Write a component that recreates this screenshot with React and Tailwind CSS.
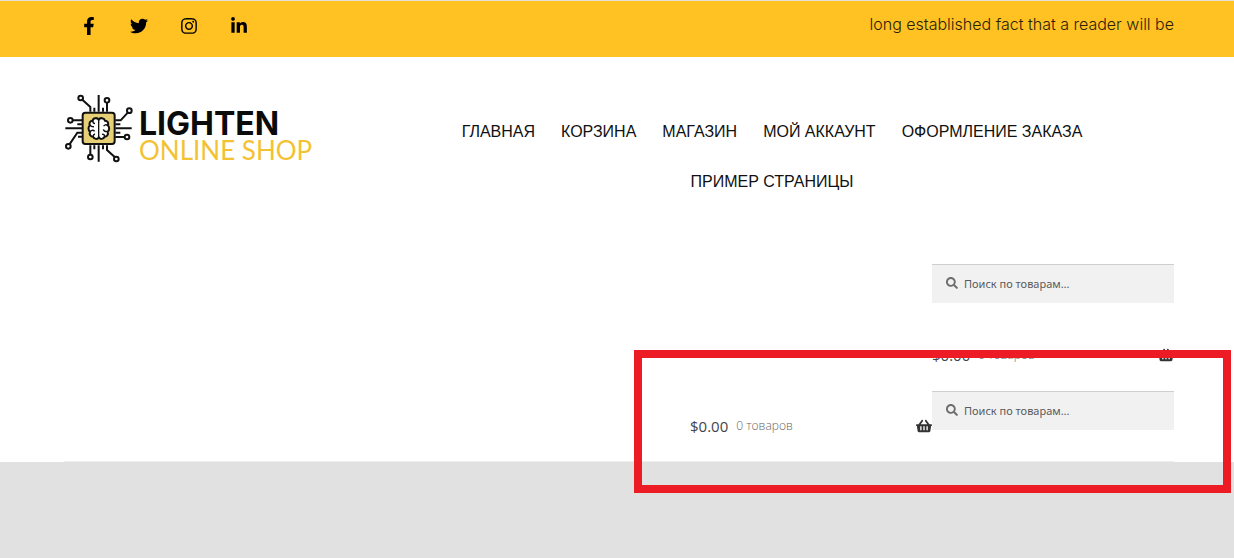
import React from "react";
import { FaFacebookF, FaTwitter, FaInstagram, FaLinkedinIn, FaSearch, FaShoppingBasket } from "react-icons/fa";

const socials = [
  { name: "Facebook", icon: FaFacebookF },
  { name: "Twitter", icon: FaTwitter },
  { name: "Instagram", icon: FaInstagram },
  { name: "LinkedIn", icon: FaLinkedinIn },
];

const menu = ["ГЛАВНАЯ", "КОРЗИНА", "МАГАЗИН", "МОЙ АККАУНТ", "ОФОРМЛЕНИЕ ЗАКАЗА", "ПРИМЕР СТРАНИЦЫ"];

// Chip with a brain inside and traces going out on every side
const ChipIcon = () => (
  <svg viewBox="12 12 210 210" className="size-[70px] shrink-0" fill="none" stroke="#111" strokeWidth="6" aria-hidden="true">
    <path d="M116 15v50M116 166v49M16 115h50M166 115h49" />
    <path d="M91 65V51L67 29M141 65V37M103 65V53M129 65V53" />
    <path d="M91 166v29M141 166v14l24 22M103 166v12M129 166v12" />
    <path d="M66 91H38M66 128H52L28 164M66 103H52M66 140H54" />
    <path d="M166 91h16l22-24M166 141h28M166 103h15M166 128h15" />
    <g fill="#fff">
      <circle cx="62" cy="24" r="7" />
      <circle cx="141" cy="31" r="7" />
      <circle cx="208" cy="62" r="7" />
      <circle cx="31" cy="91" r="7" />
      <circle cx="25" cy="169" r="7" />
      <circle cx="91" cy="201" r="7" />
      <circle cx="169" cy="207" r="7" />
      <circle cx="201" cy="141" r="7" />
    </g>
    <rect x="68" y="68" width="96" height="94" rx="8" fill="#e6cf74" />
    <path
      d="M116 89c-4-7-17-6-18 3-8 0-12 8-8 14-6 5-6 14 0 19-3 8 2 15 9 15 3 8 14 9 17 2 4 7 15 6 18-2 7 0 12-7 9-15 6-5 6-14 0-19 4-6 0-14-8-14-2-9-15-10-19-3z"
      fill="#fff"
    />
    <path d="M116 89v53M98 92c0 6 3 8 7 9M90 125c5-5 10-5 14-1M99 140c0-5 2-7 6-8M90 106c4 4 8 5 12 4M134 140c0-6-4-8-8-7M142 106c-4-3-9-2-11 3M142 125c-6 0-11-2-12-7" strokeWidth="4" />
  </svg>
);

const ProductSearch = ({ id }) => (
  <form role="search" className="relative w-[242px]">
    <label htmlFor={id} aria-label="Поиск по товарам" className="absolute left-[14px] top-[13px] text-[#6d6d6d]">
      <FaSearch className="size-3" />
    </label>
    <input
      id={id}
      type="search"
      placeholder="Поиск по товарам…"
      className="block h-[39px] w-full border-t border-[#cfcfcf] bg-[#f1f1f1] pb-0.5 pl-8 pr-3 font-['Noto_Sans',sans-serif] text-[11px] text-[#43454b] outline-none placeholder:text-[#5a5a5a]"
    />
  </form>
);

const CartLink = () => (
  <a href="#cart" className="flex h-10 w-[242px] items-center font-['Open_Sans',sans-serif] text-[15px] text-[#333]">
    <span className="text-[#43454b]">$0.00</span>
    <span className="ml-2 text-[12px] font-light text-[#666]">0 товаров</span>
    <FaShoppingBasket className="ml-auto size-4" />
  </a>
);

const App = () => {
  return (
    <div className="relative flex min-h-screen flex-col bg-white">
      {/* Top bar */}
      <div className="flex h-[57px] items-start justify-between border-t border-[#e4e0d4] bg-[#ffc222] pl-[79px] pr-[60px] text-black">
        <div className="flex gap-[30px] pt-[15px]">
          {socials.map(({ name, icon: Icon }) => (
            <a key={name} href="#social" aria-label={name} className="flex size-5 items-center justify-center">
              <Icon className="size-[18px]" />
            </a>
          ))}
        </div>
        <p className="pt-[11px] font-['Inter',sans-serif] text-[16px] font-light leading-6 text-[#2b210a]">
          long established fact that a reader will be
        </p>
      </div>

      {/* Header */}
      <header className="pl-16 pr-[60px]">
        <div className="border-b border-[#eee] pb-[15px] pt-[37px]">
          <div className="flex items-start">
            <a href="#home" className="flex w-[306px] shrink-0 gap-[5px]">
              <ChipIcon />
              <span className="flex flex-col pt-4">
                <span className="font-['Inter',sans-serif] text-[32px] font-bold leading-7 text-[#0b0b0b]">LIGHTEN</span>
                <span className="whitespace-nowrap font-['Lato',sans-serif] text-[26px] leading-6 text-[#f3c233]">ONLINE SHOP</span>
              </span>
            </a>
            <nav className="mt-[13px] grow">
              <ul className="flex flex-wrap justify-center">
                {menu.map((item) => (
                  <li key={item}>
                    <a href="#page" className="block px-[13px] font-['Liberation_Sans',sans-serif] text-[16px] leading-[50px] text-[#111]">
                      {item}
                    </a>
                  </li>
                ))}
              </ul>
            </nav>
          </div>

          <div className="mt-[57px] flex flex-col items-end">
            <ProductSearch id="search-main" />
            <div className="mt-8">
              <CartLink />
            </div>
            <div className="mt-4 flex items-start">
              <div className="pt-[15px]">
                <CartLink />
              </div>
              <ProductSearch id="search-extra" />
            </div>
          </div>
        </div>
      </header>

      <main className="grow bg-[#e1e1e1]" />

      {/* Highlight frame over the duplicated widgets */}
      <div className="pointer-events-none absolute right-[3px] top-[350px] h-[143px] w-[597px] border-8 border-[#ed1c24]" />
    </div>
  );
};

export default App;
